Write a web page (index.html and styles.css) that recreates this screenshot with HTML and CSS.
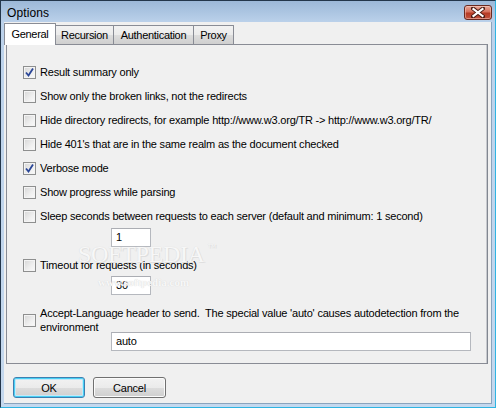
FILE: index.html
```html
<!DOCTYPE html>
<html>
<head>
<meta charset="utf-8">
<link rel="stylesheet" href="styles.css">
</head>
<body>
<div class="window">
  <div class="titlebar">
    <span class="title">Options</span>
    <div class="close">
      <svg width="14" height="11" viewBox="0 0 14 11">
        <path d="M2 1.5 L12 9.5 M12 1.5 L2 9.5" stroke="#4a1a12" stroke-width="4" stroke-linecap="square"/>
        <path d="M2.5 2 L11.5 9 M11.5 2 L2.5 9" stroke="#ffffff" stroke-width="2.2" stroke-linecap="square"/>
      </svg>
    </div>
  </div>
  <div class="client">
    <div class="tabs">
      <div class="tab active t-general">General</div>
      <div class="tab t-rec">Recursion</div>
      <div class="tab t-auth">Authentication</div>
      <div class="tab t-proxy">Proxy</div>
    </div>
    <div class="panel">
      <div class="watermark">SOFTPEDIA<span class="tm">™</span></div>
      <div class="watermark-url">www.softpedia.com</div>
      <div class="opt first"><span class="cb checked"><svg width="9" height="9" viewBox="0 0 9 9"><path d="M1 4.5 L3.5 7.5 L8 0.5" fill="none" stroke="#2a4697" stroke-width="1.8"/></svg></span><span class="lbl">Result summary only</span></div>
      <div class="opt"><span class="cb"></span><span class="lbl">Show only the broken links, not the redirects</span></div>
      <div class="opt"><span class="cb"></span><span class="lbl">Hide directory redirects, for example http://www.w3.org/TR -&gt; http://www.w3.org/TR/</span></div>
      <div class="opt"><span class="cb"></span><span class="lbl">Hide 401's that are in the same realm as the document checked</span></div>
      <div class="opt"><span class="cb checked"><svg width="9" height="9" viewBox="0 0 9 9"><path d="M1 4.5 L3.5 7.5 L8 0.5" fill="none" stroke="#2a4697" stroke-width="1.8"/></svg></span><span class="lbl">Verbose mode</span></div>
      <div class="opt"><span class="cb"></span><span class="lbl">Show progress while parsing</span></div>
      <div class="opt"><span class="cb"></span><span class="lbl">Sleep seconds between requests to each server (default and minimum: 1 second)</span></div>
      <div class="field short f-sleep">1</div>
      <div class="opt f-timeout"><span class="cb"></span><span class="lbl">Timeout for requests (in seconds)</span></div>
      <div class="field short f-30">30</div>
      <div class="opt multi"><span class="cb"></span><span class="lbl">Accept-Language header to send.&nbsp; The special value 'auto' causes autodetection from the environment</span></div>
      <div class="field long">auto</div>
    </div>
    <div class="buttons">
      <div class="btn default">OK</div>
      <div class="btn">Cancel</div>
    </div>
  </div>
</div>
</body>
</html>
```

FILE: styles.css
```css
* { box-sizing: border-box; }
html, body { margin: 0; padding: 0; }
body {
  width: 496px;
  height: 408px;
  overflow: hidden;
  font-family: "Liberation Sans", Arial, sans-serif;
  font-size: 11px;
  color: #000;
}
.window {
  width: 496px;
  height: 408px;
  display: flex;
  flex-direction: column;
  border: 1px solid #23364b;
  border-right-color: #2fb4e2;
  border-bottom-color: #2fb4e2;
  background: linear-gradient(to bottom, #9cb8d8 0px, #bcd2eb 22px, #c4d8ee 100%);
}
.titlebar {
  height: 21px;
  display: flex;
  align-items: flex-start;
  justify-content: space-between;
  padding-left: 6px;
  flex: none;
}
.title {
  font-size: 12px;
  line-height: 12px;
  margin-top: 6px;
  letter-spacing: 0.1px;
  color: #000;
}
.close {
  width: 28px;
  height: 15px;
  margin-top: 4px;
  margin-right: 3px;
  border: 1px solid #6a2a20;
  border-radius: 3px;
  background: linear-gradient(to bottom, #e8a898 0%, #d5705c 45%, #b63a24 55%, #c25440 100%);
  display: flex;
  align-items: center;
  justify-content: center;
  box-shadow: inset 0 0 0 1px rgba(255,220,210,0.45);
}
.client {
  flex: 1;
  margin: 0 3px 3px 3px;
  background: #f0f0f0;
  display: flex;
  flex-direction: column;
  border-right: 1px solid #8aa3bd;
  border-bottom: 1px solid #8aa3bd;
}
.tabs {
  height: 22px;
  display: flex;
  align-items: flex-end;
  padding-top: 1px;
  position: relative;
  z-index: 2;
}
.tab {
  height: 19px;
  border: 1px solid #898c95;
  border-bottom: none;
  border-radius: 1px 1px 0 0;
  background: linear-gradient(to bottom, #f2f2f2 0%, #ebebeb 50%, #dddddd 51%, #cfcfcf 100%);
  display: flex;
  align-items: center;
  justify-content: center;
  letter-spacing: -0.3px;
  margin-left: -1px;
  padding-bottom: 1px;
}
.tab.active {
  height: 22px;
  margin-bottom: -1px;
  background: #ffffff;
  margin-left: 0;
  margin-right: 0;
  padding-bottom: 2px;
  position: relative;
  z-index: 3;
}
.t-general { width: 52px; }
.t-rec { width: 59px; }
.t-auth { width: 81px; }
.t-proxy { width: 41px; }
.panel {
  position: relative;
  margin: 0 3px 0 2px;
  height: 320px;
  border: 1px solid #898c95;
  border-right-color: #828790;
  box-shadow: inset -1px 0 0 #c7c9ce;
  padding: 21px 0 0 16px;
  display: flex;
  flex-direction: column;
  align-items: flex-start;
}
.opt {
  height: 13px;
  display: flex;
  align-items: center;
  margin-top: 11px;
  position: relative;
  z-index: 1;
}
.opt.first { margin-top: 0; }
.cb {
  width: 13px;
  height: 13px;
  flex: none;
  border: 1px solid #8e8f8f;
  background: linear-gradient(135deg, #d6d6d6 0%, #efefef 60%, #fafafa 100%);
  box-shadow: inset 0 0 0 1px #f4f4f4;
  display: flex;
  align-items: center;
  justify-content: center;
  margin-right: 4px;
}
.lbl {
  line-height: 13px;
  letter-spacing: -0.2px;
  white-space: nowrap;
}
.field {
  background: #fff;
  border: 1px solid #b5b8be;
  border-top-color: #abadb3;
  height: 19px;
  line-height: 17px;
  padding-left: 4px;
  margin-left: 88px;
  letter-spacing: -0.2px;
  position: relative;
  z-index: 1;
}
.field.short { width: 40px; }
.f-sleep { margin-top: 5px; }
.f-timeout { margin-top: 12px; }
.f-30 { margin-top: 4px; }
.opt.multi {
  height: 28px;
  margin-top: 11px;
}
.opt.multi .lbl {
  white-space: normal;
  line-height: 14px;
  width: 440px;
}
.field.long {
  width: 360px;
  margin-top: -2px;
}
.watermark {
  position: absolute;
  left: 71px;
  top: 197px;
  font-family: "Liberation Serif", serif;
  font-size: 24px;
  letter-spacing: -0.3px;
  color: #f7f7f7;
  text-shadow: 0 0 1px #d6d6d6, 1px 1px 0 #e0e0e0;
  line-height: 24px;
  pointer-events: none;
  z-index: 2;
}
.watermark .tm {
  font-size: 9px;
  vertical-align: top;
  line-height: 10px;
  margin-left: 3px;
}
.watermark-url {
  position: absolute;
  left: 91px;
  top: 231px;
  font-family: "Liberation Serif", serif;
  font-weight: bold;
  font-size: 11px;
  color: #f8f8f8;
  text-shadow: 0 0 1px #cfcfcf;
  pointer-events: none;
  z-index: 2;
}
.buttons {
  display: flex;
  gap: 8px;
  padding: 13px 0 0 9px;
}
.btn {
  width: 72px;
  height: 21px;
  border: 1px solid #707070;
  border-radius: 3px;
  background: linear-gradient(to bottom, #f2f2f2 0%, #ebebeb 50%, #dddddd 51%, #cfcfcf 100%);
  box-shadow: inset 0 0 0 1px #fbfbfb;
  display: flex;
  align-items: center;
  justify-content: center;
  letter-spacing: -0.2px;
}
.btn + .btn { width: 73px; }
.btn.default {
  border-color: #3c7fb1;
  box-shadow: inset 0 0 0 1px #48d0f5, inset 0 0 0 2px #c4e8f8;
}
```
